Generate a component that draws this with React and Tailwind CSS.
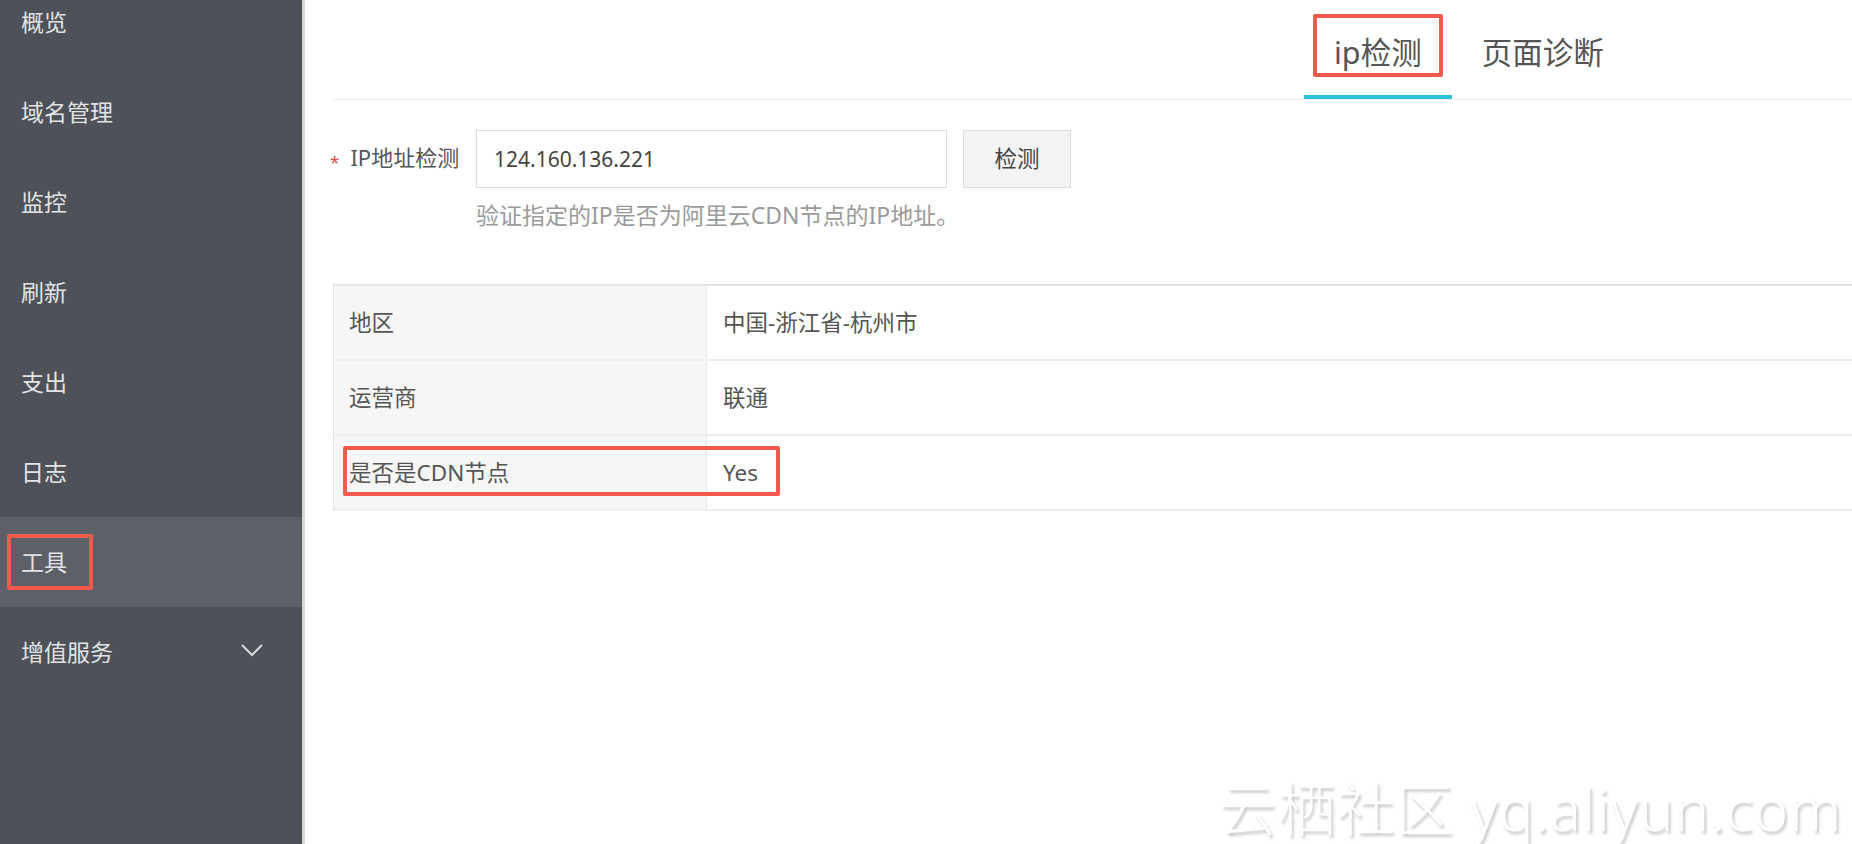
const MENU = ['概览', '域名管理', '监控', '刷新', '支出', '日志', '工具', '增值服务'];

const ROWS = [
  { label: '地区', value: '中国-浙江省-杭州市' },
  { label: '运营商', value: '联通' },
  { label: '是否是CDN节点', value: 'Yes', marked: true },
];

const FONT = "font-['Noto_Sans','Noto_Sans_CJK_SC',sans-serif]";

function Sidebar() {
  return (
    <aside className="w-[305px] shrink-0 h-full bg-[#4e5157] border-r-[3px] border-[#d6d6d6] overflow-hidden">
      <ul className="-mt-[23px]">
        {MENU.map((item) => {
          const active = item === '工具';
          return (
            <li
              key={item}
              className={`relative h-[90px] flex items-center justify-between pl-[21px] pr-[38px] text-[23px] text-[#e2e3e5] ${
                active ? 'bg-[#5d6066]' : ''
              }`}
            >
              <span>{item}</span>
              {active && (
                <span className="absolute left-[7px] top-[17px] w-[86px] h-[56px] border-4 border-[#f25a4d] rounded-[2px]" />
              )}
              {item === '增值服务' && (
                <svg width="24" height="14" viewBox="0 0 24 14" className="-mt-[4px]">
                  <path d="M2 2 L12 12 L22 2" fill="none" stroke="#d8d9db" strokeWidth="2" />
                </svg>
              )}
            </li>
          );
        })}
      </ul>
    </aside>
  );
}

function Tabs() {
  return (
    <div className="h-[100px] border-b border-[#ececec] flex pl-[971px]">
      <div className="relative h-[99px] px-[30px] pt-[30px] leading-[44px] text-[30.5px] text-[#555] border-b-4 border-[#2dc2dd]">
        ip检测
        <span className="absolute left-[9px] right-[9px] top-[14px] h-[63px] border-4 border-[#f25a4d] rounded-[2px]" />
      </div>
      <div className="h-[99px] px-[30px] pt-[30px] leading-[44px] text-[30.5px] text-[#555]">页面诊断</div>
    </div>
  );
}

function IpForm() {
  return (
    <div className="mt-[30px] flex">
      <label className="w-[143px] shrink-0 leading-[54px] text-[22px] text-[#555] whitespace-nowrap">
        <span className="-ml-[3px] text-[#e8453c] text-[17px] mr-[11px] align-[-2px]">*</span>
        IP地址检测
      </label>
      <div>
        <div className="flex gap-[16px]">
          <input
            className="w-[471px] h-[58px] border border-[#dcdcdc] px-[17px] text-[21px] text-[#444] outline-none"
            defaultValue="124.160.136.221"
          />
          <button className="w-[108px] h-[58px] bg-[#f3f3f3] border border-[#dcdcdc] text-[22.5px] text-[#444]">
            检测
          </button>
        </div>
        <p className="mt-[12px] text-[23px] leading-[30px] text-[#9a9a9a]">验证指定的IP是否为阿里云CDN节点的IP地址。</p>
      </div>
    </div>
  );
}

function ResultTable() {
  return (
    <div className="mt-[54px] border-t-2 border-l border-[#e4e4e4]">
      {ROWS.map((row) => (
        <div key={row.label} className="relative flex h-[75px] border-b-2 border-[#eceff2] text-[22.5px] text-[#555]">
          <div className="w-[373px] shrink-0 bg-[#f6f6f6] border-r border-[#e6e8eb] pl-[15px] flex items-center">
            {row.label}
          </div>
          <div className="flex-1 pl-[16px] flex items-center">{row.value}</div>
          {row.marked && (
            <span className="absolute left-[9px] top-[10px] w-[437px] h-[50px] border-4 border-[#f25a4d] rounded-[2px]" />
          )}
        </div>
      ))}
    </div>
  );
}

export default function App() {
  return (
    <div className={`relative flex w-full h-[844px] overflow-hidden bg-white ${FONT}`}>
      <Sidebar />
      <main className="flex-1 min-w-0 pl-[28px]">
        <Tabs />
        <IpForm />
        <ResultTable />
      </main>
      <div className="absolute right-[10px] bottom-[4px] text-[58px] font-light leading-[62px] text-white tracking-[1px] whitespace-nowrap [text-shadow:2px_3px_3px_rgba(0,0,0,0.22)]">
        云栖社区 yq.aliyun.com
      </div>
    </div>
  );
}
